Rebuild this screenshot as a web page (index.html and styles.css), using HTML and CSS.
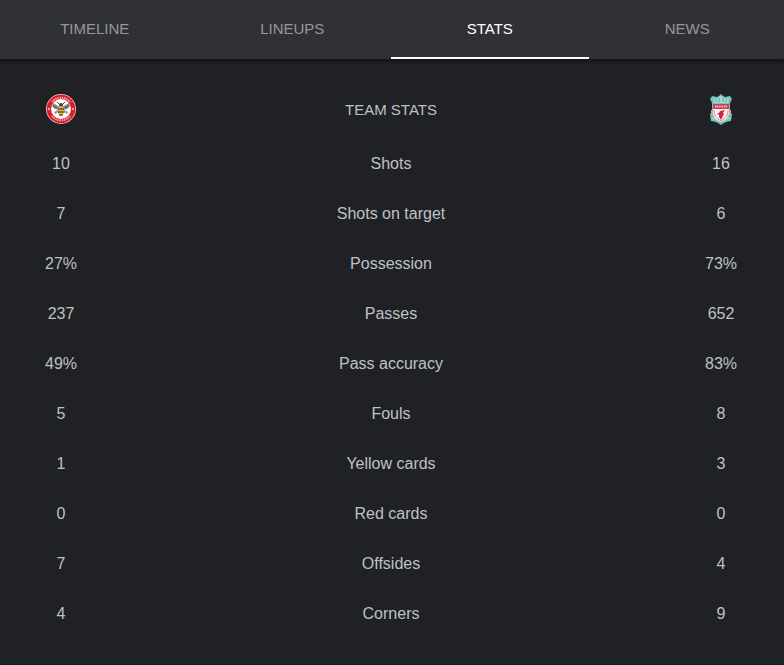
FILE: index.html
```
<!DOCTYPE html>
<html lang="en">
<head>
    <meta charset="UTF-8">
    <meta name="viewport" content="width=device-width, initial-scale=1.0">
    <title>Team stats</title>
    <link rel="stylesheet" href="styles.css">
</head>
<body>
    <div class="match">
        <nav class="tabs">
            <a class="tab" href="#timeline">TIMELINE</a>
            <a class="tab" href="#lineups">LINEUPS</a>
            <a class="tab active" href="#stats">STATS</a>
            <a class="tab" href="#news">NEWS</a>
        </nav>
        <main class="stats" id="stats">
            <table class="stats-table">
                <thead>
                    <tr>
                        <th class="side">
                            <svg class="crest" viewBox="0 0 32 32" role="img" aria-label="Brentford">
                                <circle cx="16" cy="16" r="15" fill="#f0c4c6"/>
                                <circle cx="16" cy="16" r="14.2" fill="#dc1c27"/>
                                <path d="M7 9a11.5 11.5 0 0 1 18 0M7 23a11.5 11.5 0 0 0 18 0" fill="none" stroke="#f3a6aa" stroke-width="2" stroke-dasharray="1.4 .8"/>
                                <circle cx="4" cy="16" r="1" fill="#fbdcdd"/>
                                <circle cx="28" cy="16" r="1" fill="#fbdcdd"/>
                                <circle cx="16" cy="16" r="10" fill="#fff"/>
                                <path d="M15 14L8 10l-1 3 3 3 5 1zM17 14l7-4 1 3-3 3-5 1z" fill="#8b8b89"/>
                                <path d="M14 16l-5 3 1 2 4-2zM18 16l5 3-1 2-4-2z" fill="#9d9c98"/>
                                <path d="M12 9l3 3M20 9l-3 3M12 15l-4-2M20 15l4-2" stroke="#444" fill="none"/>
                                <circle cx="16" cy="12" r="2" fill="#4a3a22"/>
                                <ellipse cx="16" cy="18" rx="3" ry="5" fill="#e5ad3c"/>
                                <path d="M13 16h6M13 19h6M14 22h4" stroke="#3b2f22"/>
                            </svg>
                        </th>
                        <th>TEAM STATS</th>
                        <th class="side">
                            <svg class="crest" viewBox="0 0 32 32" role="img" aria-label="Liverpool">
                                <path d="M16 1l2 2 2 1 5-1 2 3-2 4v9l2 2-1 7-5 1-2 1-3 2-3-2-2-1-5-1-1-7 2-2v-9L5 6l2-3 5 1 2-1z" fill="#6fc3b7"/>
                                <path d="M8 5l4 1 2-2 2-1 2 1 2 2 4-1-1 5H9z" fill="#a5dad2"/>
                                <path d="M14 5v4M18 5v4M10 6l2 3M22 6l-2 3" stroke="#55ab9f"/>
                                <path d="M8 11h16v8c0 5-3 8-8 10-5-2-8-5-8-10z" fill="#fbf3f4"/>
                                <path d="M8 11h16v5H8z" fill="#cf3c58"/>
                                <path d="M10 13.5h12" stroke="#f1bfc9" stroke-width="2" stroke-dasharray="1.2 .6"/>
                                <path d="M9 17c0 5 2 8 7 11 5-3 7-6 7-11" stroke="#e07f91" fill="none"/>
                                <path d="M20 17l-5 1-1 2-2 1 2 1v2l2 3 2-4 1-2-1-1z" fill="#cf2748"/>
                                <path d="M7 17v5M25 17v5" stroke="#dfa08c" stroke-width="2"/>
                                <path d="M6 25l4 1 3 2M26 25l-4 1-3 2" stroke="#b4e3db" fill="none"/>
                            </svg>
                        </th>
                    </tr>
                </thead>
                <tbody>
                    <tr><td>10</td><th>Shots</th><td>16</td></tr>
                    <tr><td>7</td><th>Shots on target</th><td>6</td></tr>
                    <tr><td>27%</td><th>Possession</th><td>73%</td></tr>
                    <tr><td>237</td><th>Passes</th><td>652</td></tr>
                    <tr><td>49%</td><th>Pass accuracy</th><td>83%</td></tr>
                    <tr><td>5</td><th>Fouls</th><td>8</td></tr>
                    <tr><td>1</td><th>Yellow cards</th><td>3</td></tr>
                    <tr><td>0</td><th>Red cards</th><td>0</td></tr>
                    <tr><td>7</td><th>Offsides</th><td>4</td></tr>
                    <tr><td>4</td><th>Corners</th><td>9</td></tr>
                </tbody>
            </table>
        </main>
    </div>
</body>
</html>
```
FILE: styles.css
```
body {
    margin: 0;
    font-family: "Liberation Sans", Arial, sans-serif;
    font-size: 16px;
    color: #bdc1c6;
    background-color: #202124;
    overflow-x: hidden;
}
/* the panel runs slightly past the window on both sides */
.match {
    margin: 0 -2px 0 -4px;
}
.tabs {
    display: flex;
    background-color: #303134;
    box-shadow: 0 2px 4px rgba(0, 0, 0, 0.5);
}
.tab {
    flex: 1;
    box-sizing: border-box;
    height: 59px;
    line-height: 58px;
    border-bottom: 2px solid transparent;
    text-align: center;
    text-decoration: none;
    font-size: 15px;
    color: #96979a;
}
.tab.active {
    color: #fff;
    border-bottom-color: #fff;
}
.stats {
    padding: 20px 16px 25px;
    border-bottom: 1px solid #17181a;
}
.stats-table {
    width: 100%;
    table-layout: fixed;
    border-collapse: collapse;
    text-align: center;
}
.stats-table th,
.stats-table td {
    height: 50px;
    padding: 0;
    font-weight: normal;
}
.stats-table thead th {
    height: 60px;
    font-size: 15px;
}
.stats-table .side {
    width: 98px;
}
.crest {
    display: block;
    width: 32px;
    height: 32px;
    margin: 0 auto;
}
```
